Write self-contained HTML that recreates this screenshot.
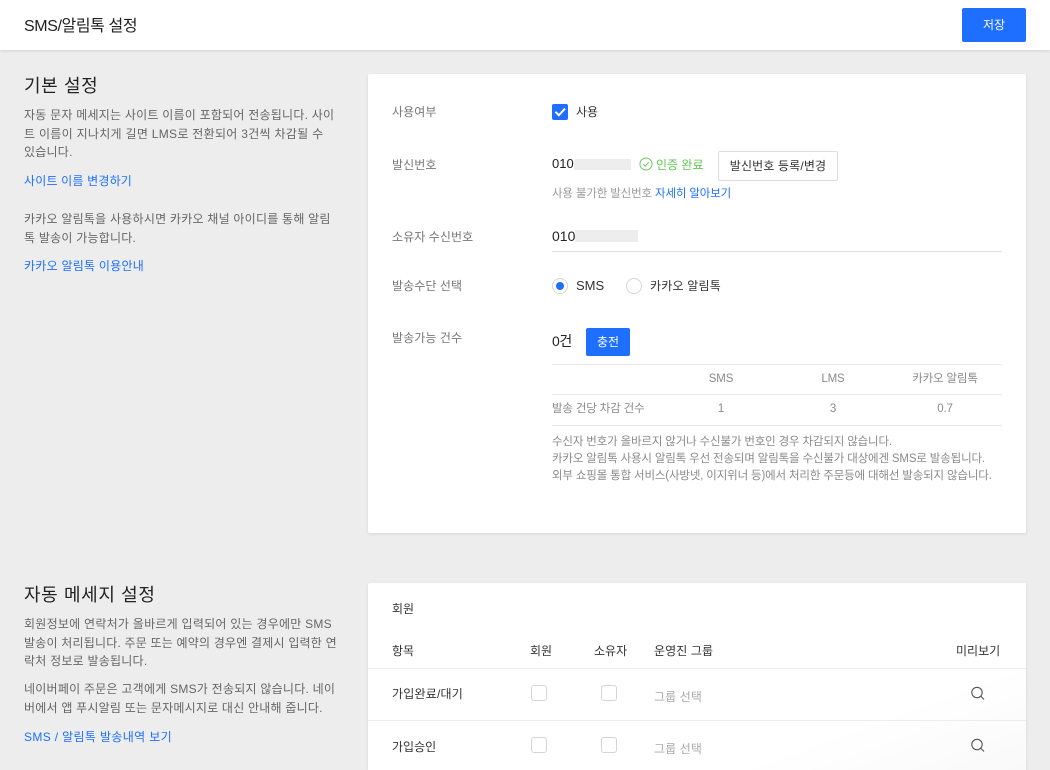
<!DOCTYPE html>
<html lang="ko"><head><meta charset="utf-8"><title>SMS/알림톡 설정</title>
<style>
*{box-sizing:border-box}
html,body{margin:0;padding:0;width:1050px;height:770px;overflow:hidden}
body{background:#ededed;position:relative;font-family:"Liberation Sans","Noto Sans CJK KR",sans-serif;color:#222}
.t{position:absolute;white-space:nowrap;line-height:18px;font-size:12px;height:18px}
.g{color:#666;letter-spacing:.23px}.l{color:#777;letter-spacing:.08px}.b{color:#1e6fff;letter-spacing:.23px}.d{color:#333}
.n{font-size:11.5px;color:#8a8a8a;letter-spacing:-.16px}
.c{text-align:center}
.h{font-size:18px;line-height:26px;height:26px;color:#222;letter-spacing:.62px}
.abs{position:absolute}
.cb{position:absolute;width:16px;height:16px;border:1px solid #d5d5d5;border-radius:3px;background:#fff}
.hr{position:absolute;height:1px;background:#e8e8e8}
.ph{position:absolute;background:#ededed}
</style></head><body>
<div class="abs" style="left:0;top:0;width:1050px;height:50px;background:#fff;box-shadow:0 1px 3px rgba(0,0,0,.12)"></div>
<div class="t" style="left:24px;top:17px;font-size:16px;line-height:20px;height:20px;color:#222;letter-spacing:-.4px">SMS/알림톡 설정</div>
<div class="abs c" style="left:962px;top:8px;width:64px;height:34px;background:#1e6fff;border-radius:2px;color:#fff;font-size:12px;line-height:35px">저장</div>

<div class="t h" style="left:24px;top:73px">기본 설정</div>
<div class="t g" style="left:24px;top:106px">자동 문자 메세지는 사이트 이름이 포함되어 전송됩니다. 사이</div>
<div class="t g" style="left:24px;top:125px;letter-spacing:.29px">트 이름이 지나치게 길면 LMS로 전환되어 3건씩 차감될 수</div>
<div class="t g" style="left:24px;top:143px">있습니다.</div>
<div class="t b" style="left:24px;top:172px;letter-spacing:.18px">사이트 이름 변경하기</div>
<div class="t g" style="left:24px;top:210px">카카오 알림톡을 사용하시면 카카오 채널 아이디를 통해 알림</div>
<div class="t g" style="left:24px;top:229px">톡 발송이 가능합니다.</div>
<div class="t b" style="left:24px;top:257px;letter-spacing:.25px">카카오 알림톡 이용안내</div>

<div class="abs" style="left:368px;top:74px;width:658px;height:459px;background:#fff;border-radius:2px;box-shadow:0 1px 3px rgba(0,0,0,.1)"></div>
<div class="t l" style="left:392px;top:103px">사용여부</div>
<div class="abs" style="left:552px;top:104px;width:16px;height:16px;background:#1e6fff;border-radius:2px"><svg width="16" height="16" viewBox="0 0 16 16" style="display:block"><path d="M3.4 7.8 6.9 11.2 13 4.6" fill="none" stroke="#fff" stroke-width="2"/></svg></div>
<div class="t d" style="left:576px;top:103px">사용</div>

<div class="t l" style="left:392px;top:156px">발신번호</div>
<div class="t" style="left:552px;top:155px;font-size:13px;color:#222">010</div>
<div class="ph" style="left:574px;top:159px;width:57px;height:11px"></div>
<svg class="abs" style="left:639px;top:157px" width="14" height="14" viewBox="0 0 14 14"><circle cx="7" cy="7" r="6" fill="none" stroke="#6cc95f" stroke-width="1"/><path d="M4.3 7.2 6.3 9.1 9.8 5.2" fill="none" stroke="#6cc95f" stroke-width="1"/></svg>
<div class="t" style="left:656px;top:156px;color:#5fc551">인증 완료</div>
<div class="abs c" style="left:718px;top:151px;width:120px;height:30px;border:1px solid #ddd;border-radius:2px;background:#fff;font-size:12px;line-height:29px;color:#333;letter-spacing:.15px">발신번호 등록/변경</div>
<div class="t" style="left:552px;top:185px;font-size:11.5px;color:#999;letter-spacing:-.15px">사용 불가한 발신번호 <span style="color:#1e6fff">자세히 알아보기</span></div>

<div class="t l" style="left:392px;top:228px">소유자 수신번호</div>
<div class="t" style="left:552px;top:227px;font-size:14px;color:#222">010</div>
<div class="ph" style="left:575px;top:230px;width:63px;height:12px"></div>
<div class="hr" style="left:552px;top:251px;width:450px;background:#e0e0e0"></div>

<div class="t l" style="left:392px;top:277px">발송수단 선택</div>
<div class="abs" style="left:552px;top:278px;width:16px;height:16px;border:1px solid #d5d5d5;border-radius:50%;background:#fff"><div class="abs" style="left:3px;top:3px;width:8px;height:8px;background:#1e6fff;border-radius:50%"></div></div>
<div class="t d" style="left:576px;top:277px;font-size:13px">SMS</div>
<div class="abs" style="left:626px;top:278px;width:16px;height:16px;border:1px solid #d5d5d5;border-radius:50%;background:#fff"></div>
<div class="t d" style="left:650px;top:277px;letter-spacing:.2px">카카오 알림톡</div>

<div class="t l" style="left:392px;top:329px">발송가능 건수</div>
<div class="t" style="left:552px;top:332px;font-size:14px;color:#222;letter-spacing:-.4px">0건</div>
<div class="abs c" style="left:586px;top:328px;width:44px;height:28px;background:#1e6fff;border-radius:2px;color:#fff;font-size:12px;line-height:28px">충전</div>
<div class="hr" style="left:552px;top:364px;width:450px"></div>
<div class="t n c" style="left:677px;top:370px;width:88px">SMS</div>
<div class="t n c" style="left:789px;top:370px;width:88px">LMS</div>
<div class="t n c" style="left:901px;top:370px;width:88px">카카오 알림톡</div>
<div class="hr" style="left:552px;top:394px;width:450px"></div>
<div class="t n" style="left:552px;top:400px">발송 건당 차감 건수</div>
<div class="t n c" style="left:677px;top:400px;width:88px">1</div>
<div class="t n c" style="left:789px;top:400px;width:88px">3</div>
<div class="t n c" style="left:901px;top:400px;width:88px">0.7</div>
<div class="hr" style="left:552px;top:425px;width:450px"></div>
<div class="t n" style="left:552px;top:433px">수신자 번호가 올바르지 않거나 수신불가 번호인 경우 차감되지 않습니다.</div>
<div class="t n" style="left:552px;top:450px">카카오 알림톡 사용시 알림톡 우선 전송되며 알림톡을 수신불가 대상에겐 SMS로 발송됩니다.</div>
<div class="t n" style="left:552px;top:467px">외부 쇼핑몰 통합 서비스(사방넷, 이지위너 등)에서 처리한 주문등에 대해선 발송되지 않습니다.</div>

<div class="t h" style="left:24px;top:582px">자동 메세지 설정</div>
<div class="t g" style="left:24px;top:615px;letter-spacing:.25px">회원정보에 연락처가 올바르게 입력되어 있는 경우에만 SMS</div>
<div class="t g" style="left:24px;top:634px;letter-spacing:.2px">발송이 처리됩니다. 주문 또는 예약의 경우엔 결제시 입력한 연</div>
<div class="t g" style="left:24px;top:652px">락처 정보로 발송됩니다.</div>
<div class="t g" style="left:24px;top:680px;letter-spacing:.24px">네이버페이 주문은 고객에게 SMS가 전송되지 않습니다. 네이</div>
<div class="t g" style="left:24px;top:699px;letter-spacing:.22px">버에서 앱 푸시알림 또는 문자메시지로 대신 안내해 줍니다.</div>
<div class="t b" style="left:24px;top:728px;letter-spacing:.35px">SMS / 알림톡 발송내역 보기</div>

<div class="abs" style="left:368px;top:583px;width:658px;height:187px;background:linear-gradient(160deg,#fff 75%,#f9f9f9 100%);border-radius:2px 2px 0 0;box-shadow:0 1px 3px rgba(0,0,0,.1)"></div>
<div class="t d" style="left:392px;top:600px">회원</div>
<div class="t d" style="left:392px;top:642px">항목</div>
<div class="t d" style="left:530px;top:642px">회원</div>
<div class="t d" style="left:594px;top:642px">소유자</div>
<div class="t d" style="left:654px;top:642px;letter-spacing:.1px">운영진 그룹</div>
<div class="t d" style="left:956px;top:642px">미리보기</div>
<div class="hr" style="left:368px;top:668px;width:658px;background:#eee"></div>
<div class="t d" style="left:392px;top:685px;letter-spacing:.2px">가입완료/대기</div>
<div class="cb" style="left:531px;top:685px"></div>
<div class="cb" style="left:601px;top:685px"></div>
<div class="t" style="left:654px;top:688px;color:#aaa;letter-spacing:.1px">그룹 선택</div>
<svg class="abs" style="left:970px;top:685px" width="16" height="16" viewBox="0 0 16 16"><circle cx="7" cy="7.5" r="5.2" fill="none" stroke="#555" stroke-width="1.1"/><path d="M10.8 11.2 14 14.5" stroke="#555" stroke-width="1.1" fill="none"/></svg>
<div class="hr" style="left:368px;top:720px;width:658px;background:#eee"></div>
<div class="t d" style="left:392px;top:738px">가입승인</div>
<div class="cb" style="left:531px;top:737px"></div>
<div class="cb" style="left:601px;top:737px"></div>
<div class="t" style="left:654px;top:740px;color:#aaa;letter-spacing:.1px">그룹 선택</div>
<svg class="abs" style="left:970px;top:737px" width="16" height="16" viewBox="0 0 16 16"><circle cx="7" cy="7.5" r="5.2" fill="none" stroke="#555" stroke-width="1.1"/><path d="M10.8 11.2 14 14.5" stroke="#555" stroke-width="1.1" fill="none"/></svg>
</body></html>
